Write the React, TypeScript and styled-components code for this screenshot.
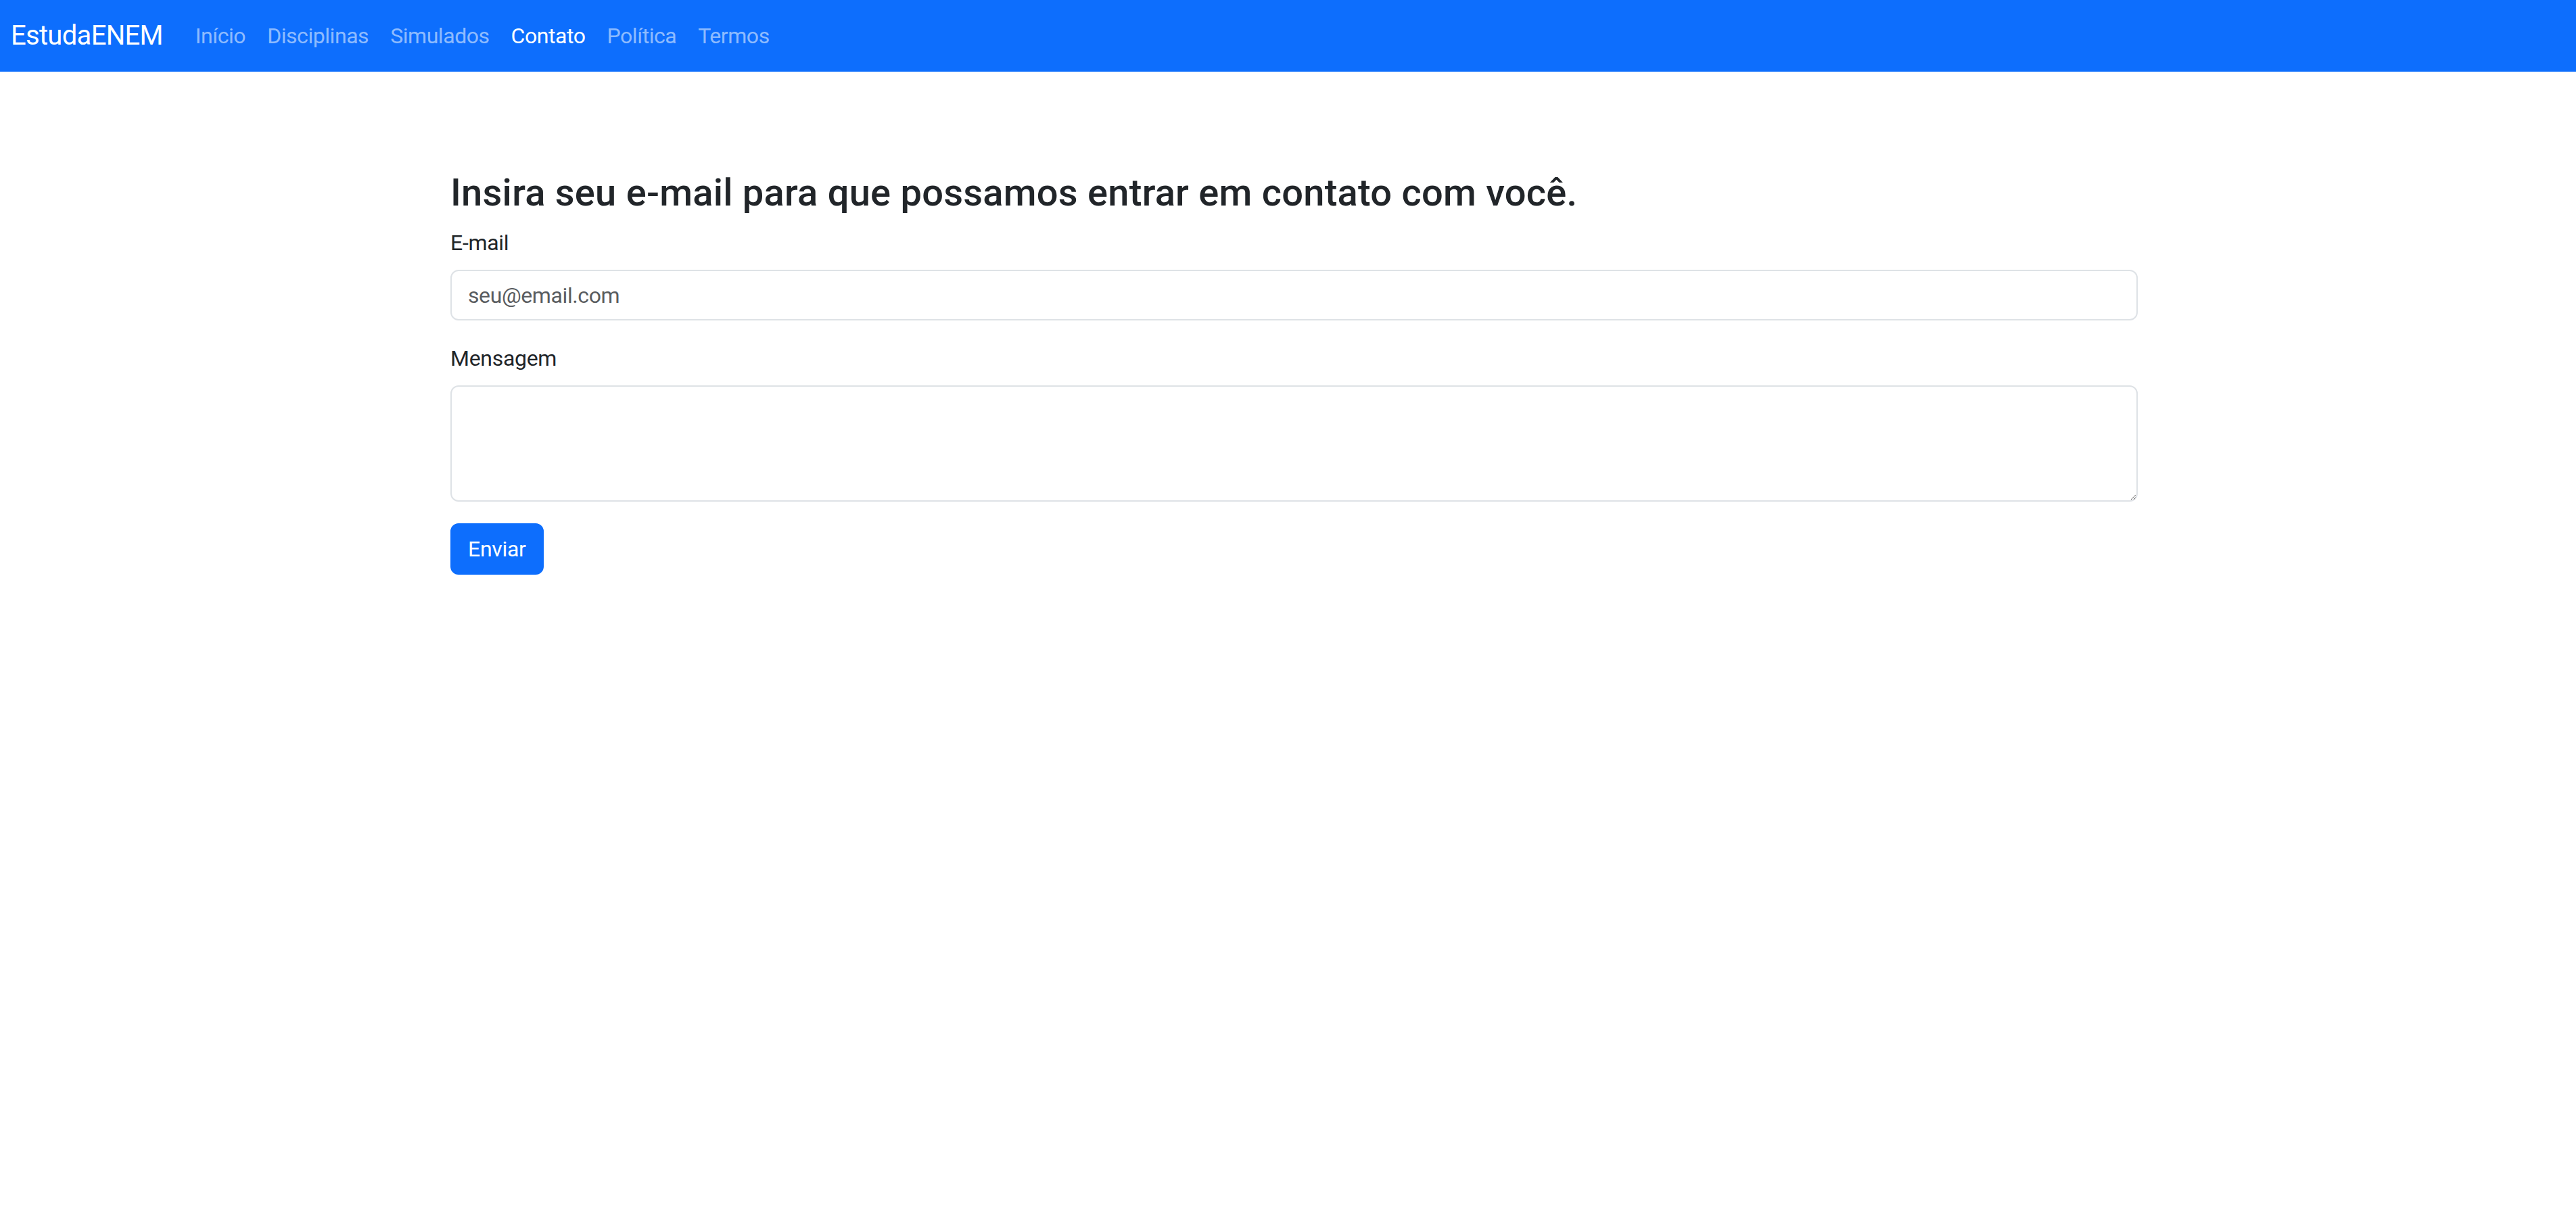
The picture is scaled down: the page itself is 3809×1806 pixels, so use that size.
import React from "react";
import styled, { createGlobalStyle } from "styled-components";

const GlobalStyle = createGlobalStyle`
  html, body {
    margin: 0;
    padding: 0;
    background: #ffffff;
  }
  body {
    font-family: Roboto, "Open Sans", sans-serif;
    color: #212529;
  }
  * { box-sizing: border-box; }
`;

const Navbar = styled.nav`
  display: flex;
  align-items: center;
  height: 106px;
  padding: 0 16px;
  background: #0d6efd;
`;

const Brand = styled.a`
  font-size: 40px;
  line-height: 60px;
  letter-spacing: -0.7px;
  color: #ffffff;
  text-decoration: none;
  margin-right: 32px;
`;

const NavList = styled.ul`
  display: flex;
  list-style: none;
  margin: 0;
  padding: 0;
`;

const NavLink = styled.a<{ $active?: boolean }>`
  display: block;
  padding: 16px 16px;
  font-size: 32px;
  line-height: 48px;
  letter-spacing: -0.45px;
  text-decoration: none;
  color: ${(p) => (p.$active ? "#ffffff" : "rgba(255, 255, 255, 0.55)")};
`;

const Main = styled.main`
  width: 2495px;
  margin-left: 666px;
  padding-top: 146px;
`;

const Heading = styled.h3`
  font-size: 56px;
  font-weight: 500;
  line-height: 1.2;
  letter-spacing: 0.25px;
  margin: 0 0 16px;
  color: #212529;
`;

const Field = styled.div`
  margin-bottom: 32px;
`;

const Label = styled.label`
  display: block;
  font-size: 32px;
  line-height: 48px;
  letter-spacing: -0.3px;
  margin-bottom: 16px;
  color: #212529;
`;

const Input = styled.input`
  display: block;
  width: 100%;
  height: 75px;
  padding: 0 24px;
  font-family: inherit;
  font-size: 32px;
  letter-spacing: -0.4px;
  color: #212529;
  background: #ffffff;
  border: 2px solid #dee2e6;
  border-radius: 12px;
  outline: none;
  &::placeholder {
    color: #595c5f;
  }
`;

const TextArea = styled.textarea`
  display: block;
  width: 100%;
  height: 172px;
  padding: 12px 24px;
  font-family: inherit;
  font-size: 32px;
  line-height: 48px;
  color: #212529;
  background: #ffffff;
  border: 2px solid #dee2e6;
  border-radius: 12px;
  outline: none;
  resize: vertical;
`;

const Button = styled.button`
  display: inline-block;
  height: 76px;
  padding: 0 24px;
  font-family: inherit;
  font-size: 32px;
  line-height: 48px;
  letter-spacing: -0.3px;
  color: #ffffff;
  background: #0d6efd;
  border: 2px solid #0d6efd;
  border-radius: 12px;
  cursor: pointer;
`;

const links = [
  { label: "Início" },
  { label: "Disciplinas" },
  { label: "Simulados" },
  { label: "Contato", active: true },
  { label: "Política" },
  { label: "Termos" },
];

export default function App() {
  return (
    <>
      <GlobalStyle />
      <Navbar>
        <Brand href="#">EstudaENEM</Brand>
        <NavList>
          {links.map((l) => (
            <li key={l.label}>
              <NavLink href="#" $active={l.active}>
                {l.label}
              </NavLink>
            </li>
          ))}
        </NavList>
      </Navbar>
      <Main>
        <Heading>Insira seu e-mail para que possamos entrar em contato com você.</Heading>
        <form onSubmit={(e) => e.preventDefault()}>
          <Field>
            <Label htmlFor="email">E-mail</Label>
            <Input id="email" type="email" placeholder="seu@email.com" />
          </Field>
          <Field>
            <Label htmlFor="msg">Mensagem</Label>
            <TextArea id="msg" />
          </Field>
          <Button type="submit">Enviar</Button>
        </form>
      </Main>
    </>
  );
}
